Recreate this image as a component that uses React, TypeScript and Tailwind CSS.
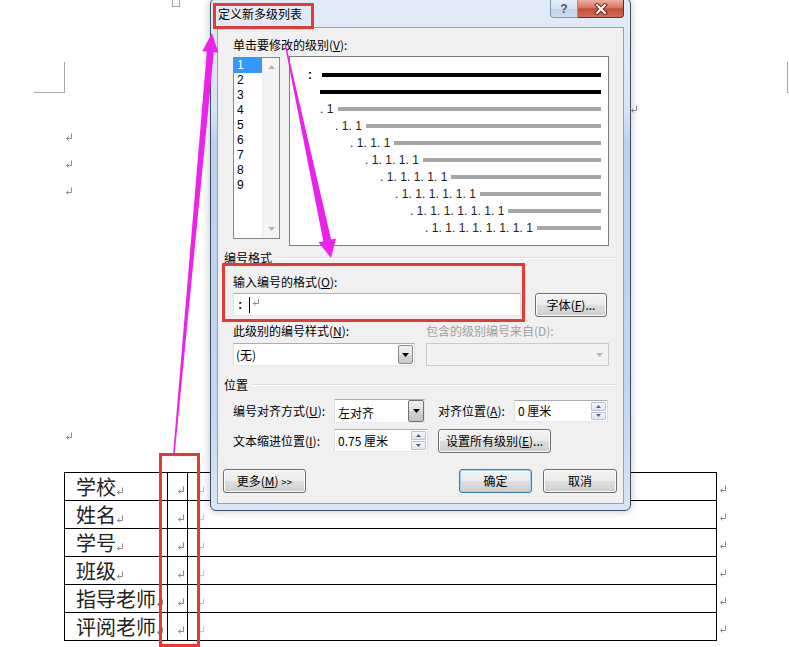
import type { ReactNode } from "react";

const uiFont = "font-['Liberation_Sans','Noto_Sans_CJK_SC',sans-serif]";
const cjk = "font-['Noto_Sans_CJK_SC',sans-serif]";

function ReturnMark({ className = "" }: { className?: string }) {
  return (
    <svg viewBox="0 0 8 8" className={`h-[8px] w-[8px] shrink-0 ${className}`} aria-hidden="true">
      <path
        d="M6.5 0.5V5.5H1.5M3.5 3.5L1.5 5.5L3.5 7.5"
        fill="none"
        stroke="currentColor"
        strokeWidth="1"
      />
    </svg>
  );
}

function Key({ label, k, tail = ":" }: { label: string; k: string; tail?: string }) {
  return (
    <span className="whitespace-nowrap">
      {label}(<u>{k}</u>){tail}
    </span>
  );
}

function WinButton({
  children,
  className = "",
  primary,
}: {
  children: ReactNode;
  className?: string;
  primary?: boolean;
}) {
  return (
    <div
      className={`flex items-center justify-center rounded-[3px] border bg-[linear-gradient(180deg,#f3f3f3_0%,#ebebeb_48%,#dddddd_52%,#cfcfcf_100%)] ${
        primary
          ? "border-[#3c7fb1] shadow-[inset_0_0_0_1px_#9fd0ee]"
          : "border-[#707070] shadow-[inset_0_0_0_1px_#fbfbfb]"
      } ${className}`}
    >
      {children}
    </div>
  );
}

function ArrowDown({ color = "#000" }: { color?: string }) {
  return (
    <svg viewBox="0 0 7 4" className="h-[4px] w-[7px]" aria-hidden="true">
      <path d="M0 0H7L3.5 4Z" fill={color} />
    </svg>
  );
}

function Spinner() {
  return (
    <div className="flex w-[16px] flex-col gap-[1px] py-[1px] pr-[1px]">
      {[0, 1].map((i) => (
        <div
          key={i}
          className="flex flex-1 items-center justify-center rounded-[1px] border border-[#b7c3d1] bg-[linear-gradient(180deg,#f4f7fa_0%,#dfe6ee_100%)]"
        >
          <svg viewBox="0 0 5 3" className="h-[3px] w-[5px]" aria-hidden="true">
            <path d={i === 0 ? "M0 3H5L2.5 0Z" : "M0 0H5L2.5 3Z"} fill="#4f6384" />
          </svg>
        </div>
      ))}
    </div>
  );
}

const field =
  "border border-[#abadb3] border-x-[#dbdfe6] border-b-[#e3e9ef] bg-white";

const levels = ["1", "2", "3", "4", "5", "6", "7", "8", "9"];

const tableRows = ["学校", "姓名", "学号", "班级", "指导老师", "评阅老师"];

function SectionHead({ title, gap }: { title: string; gap: string }) {
  return (
    <div className="flex h-[16px] items-center">
      <span>{title}</span>
      <div className={`h-[2px] flex-1 border-t border-b border-t-[#d5dfe5] border-b-white ${gap}`} />
    </div>
  );
}

function Dialog() {
  return (
    <div
      className={`absolute left-[210px] top-[-2px] flex h-[513px] w-[421px] flex-col rounded-[6px] border border-[#3d4f66] bg-[linear-gradient(180deg,#e2ecf7_0%,#d6e4f3_22%,#bcd2ea_28%,#c3d7ee_80%,#d8e6f5_100%)] px-[6px] pb-[6px] text-[12px] leading-[16px] text-black shadow-[0_0_8px_rgba(0,0,0,0.25)] ${uiFont}`}
    >
      <div className="flex h-[28px] items-start justify-between">
        <span className={`pl-[1px] pt-[7px] ${cjk}`}>定义新多级列表</span>
        <div className="mt-[1px] flex">
          <div className="flex h-[18px] w-[28px] items-center justify-center rounded-bl-[4px] border border-t-0 border-[#8494aa] bg-[linear-gradient(180deg,#e8f0f8_0%,#d5e2f0_50%,#c1d3e8_52%,#cddcee_100%)] text-[12px] font-bold text-[#44556e]">
            ?
          </div>
          <div className="flex h-[18px] w-[46px] items-center justify-center rounded-br-[4px] border border-l-0 border-t-0 border-[#6b2a24] bg-[linear-gradient(180deg,#eab0a4_0%,#d8775f_46%,#c44b33_52%,#d56f58_100%)]">
            <svg viewBox="0 0 14 12" className="h-[12px] w-[14px]" aria-hidden="true">
              <path d="M3 2L11 10M11 2L3 10" stroke="#5b1f17" strokeWidth="4" strokeLinecap="square" />
              <path d="M3 2L11 10M11 2L3 10" stroke="#fff" strokeWidth="2.2" strokeLinecap="square" />
            </svg>
          </div>
        </div>
      </div>

      <div className="flex-1 border border-[#8da2bb] bg-[#f0f0f0] px-[6px] pt-[9px]">
        <div className={`ml-[9px] h-[19px] ${cjk}`}>
          <Key label="单击要修改的级别" k="V" />
        </div>
        <div className="ml-[9px] flex items-start">
          <div className="mt-[1px] flex h-[182px] w-[47px] border border-[#828790] bg-white">
            <div className="w-[28px]">
              {levels.map((n, i) => (
                <div
                  key={n}
                  className={`h-[15px] pl-[3px] text-[12px] leading-[15px] ${
                    i === 0 ? "bg-[#3399ff] text-white" : ""
                  }`}
                >
                  {n}
                </div>
              ))}
            </div>
            <div className="flex w-[17px] flex-col items-center justify-between border-l border-[#ececec] bg-[#f5f5f5] py-[7px]">
              <svg viewBox="0 0 7 4" className="h-[4px] w-[7px]" aria-hidden="true">
                <path d="M0 4H7L3.5 0Z" fill="#b4b4b4" />
              </svg>
              <ArrowDown color="#b4b4b4" />
            </div>
          </div>

          <div className="ml-[9px] h-[190px] w-[320px] border border-[#7e7e7e] bg-white pr-[7px] pt-[9px]">
            <div className="flex h-[17px] items-center pl-[18px]">
              <span className="text-[12px] font-bold leading-none">:</span>
              <div className="ml-[10px] h-[4px] flex-1 bg-black" />
            </div>
            <div className="flex h-[17px] items-center pl-[30px]">
              <div className="h-[4px] flex-1 bg-black" />
            </div>
            {levels.slice(0, 8).map((_, k) => (
              <div
                key={k}
                className="flex h-[17px] items-center"
                style={{ paddingLeft: 30 + 15 * k }}
              >
                <span className="whitespace-pre text-[12px] tracking-[0.05px] text-[#222]">
                  {Array.from({ length: k + 1 }, () => ". 1").join("")}
                </span>
                <div className="ml-[4px] h-[4px] flex-1 bg-[#a6a6a6]" />
              </div>
            ))}
          </div>
        </div>

        <div className={`mt-[4px] ${cjk}`}>
          <SectionHead title="编号格式" gap="ml-[3px]" />
        </div>

        <div className={`ml-[9px] mt-[8px] h-[16px] ${cjk}`}>
          <Key label="输入编号的格式" k="O" />
        </div>
        <div className="ml-[9px] mt-[3px] flex items-start">
          <div className={`flex h-[23px] w-[288px] items-start pl-[4px] pt-[3px] ${field}`}>
            <span className="text-[13px] font-bold leading-[16px]">:</span>
            <div className="ml-[7px] h-[16px] w-[1px] bg-black" />
            <ReturnMark className="ml-[2px] mt-[1px] text-[#8a8a8a]" />
          </div>
          <WinButton className={`ml-[14px] h-[24px] w-[72px] ${cjk}`}>
            <Key label="字体" k="F" tail="..." />
          </WinButton>
        </div>

        <div className={`ml-[9px] mt-[6px] flex h-[16px] ${cjk}`}>
          <div className="w-[193px]">
            <Key label="此级别的编号样式" k="N" />
          </div>
          <div className="text-[#a0a0a0]">包含的级别编号来自(D):</div>
        </div>
        <div className="ml-[9px] mt-[4px] flex">
          <div className={`flex h-[23px] w-[182px] items-center justify-between pl-[2px] ${field}`}>
            <span className={cjk}>(无)</span>
            <div className="mr-[1px] flex h-[19px] w-[15px] items-center justify-center rounded-[2px] border border-[#8a8a8a] bg-[linear-gradient(180deg,#f2f2f2_0%,#e5e5e5_50%,#d6d6d6_52%,#cacaca_100%)]">
              <ArrowDown />
            </div>
          </div>
          <div className="ml-[11px] flex h-[23px] w-[183px] items-center justify-end border border-[#c9c9c9] bg-[#f2f2f2] pr-[5px]">
            <ArrowDown color="#b8b8b8" />
          </div>
        </div>

        <div className={`mt-[11px] ${cjk}`}>
          <SectionHead title="位置" gap="ml-[5px]" />
        </div>

        <div className={`ml-[9px] mt-[6px] flex h-[24px] items-center ${cjk}`}>
          <div className="w-[101px]">
            <Key label="编号对齐方式" k="U" />
          </div>
          <div className={`flex h-[24px] w-[91px] items-center justify-between pl-[3px] ${field}`}>
            <span className="pt-[3px]">左对齐</span>
            <div className="flex h-[22px] w-[16px] items-center justify-center rounded-[2px] border border-[#707070] bg-[linear-gradient(180deg,#f2f2f2_0%,#e3e3e3_50%,#d3d3d3_52%,#c4c4c4_100%)]">
              <ArrowDown />
            </div>
          </div>
          <div className="ml-[13px] w-[76px]">
            <Key label="对齐位置" k="A" />
          </div>
          <div className={`flex h-[22px] w-[94px] items-stretch justify-between pl-[3px] ${field}`}>
            <span className="self-center">0 厘米</span>
            <Spinner />
          </div>
        </div>

        <div className={`ml-[9px] mt-[6px] flex h-[23px] items-center ${cjk}`}>
          <div className="w-[101px]">
            <Key label="文本缩进位置" k="I" />
          </div>
          <div className={`flex h-[23px] w-[94px] items-stretch justify-between pl-[3px] ${field}`}>
            <span className="self-center">0.75 厘米</span>
            <Spinner />
          </div>
          <WinButton className="ml-[10px] h-[24px] w-[113px]">
            <Key label="设置所有级别" k="E" tail="..." />
          </WinButton>
        </div>

        <div className={`mt-[17px] flex items-center justify-between ${cjk}`}>
          <WinButton className="-ml-[1px] h-[24px] w-[83px]">
            <span className="whitespace-nowrap">
              更多(<u>M</u>) <span className="text-[10px]">&gt;&gt;</span>
            </span>
          </WinButton>
          <div className="flex gap-[11px]">
            <WinButton primary className="h-[24px] w-[73px]">
              确定
            </WinButton>
            <WinButton className="h-[24px] w-[74px]">取消</WinButton>
          </div>
        </div>
      </div>
    </div>
  );
}

export default function App() {
  return (
    <div className="relative h-[647px] w-[789px] overflow-hidden bg-white">
      <div className="h-[62px]">
        <div className="ml-[172px] h-[7px] w-[8px] border border-t-0 border-[#a0a0a0]" />
      </div>
      <div className="flex h-[31px] justify-between">
        <div className="ml-[34px] w-[31px] border-b border-r border-[#a8a8a8]" />
        <div className="w-[2px] border-b border-l border-[#a8a8a8]" />
      </div>

      <div className="ml-[630px] mt-[12px] text-[#8a8a8a]">
        <ReturnMark />
      </div>
      <div className="ml-[65px] mt-[20px] text-[#8a8a8a]">
        <ReturnMark />
      </div>
      <div className="ml-[65px] mt-[19px] text-[#8a8a8a]">
        <ReturnMark />
      </div>
      <div className="ml-[65px] mt-[19px] text-[#8a8a8a]">
        <ReturnMark />
      </div>
      <div className="ml-[65px] mt-[237px] text-[#8a8a8a]">
        <ReturnMark />
      </div>

      <div className={`ml-[64px] mt-[32px] text-[20px] text-[#222] ${cjk}`}>
        {tableRows.map((name, i) => (
          <div key={name} className="flex items-center">
            <div
              className={`flex w-[653px] border-x border-b border-black ${
                i === 0 ? "h-[29px] border-t" : "h-[28px]"
              }`}
            >
              <div className="flex w-[103px] items-center overflow-hidden border-r border-black pl-[11px]">
                <span className="whitespace-nowrap leading-[26px]">{name}</span>
                <ReturnMark className="mt-[8px] h-[6px] w-[6px] text-[#8a8a8a]" />
              </div>
              <div className="flex w-[20px] items-center border-r border-black pl-[9px]">
                <ReturnMark className="mt-[6px] h-[6px] w-[6px] text-[#8a8a8a]" />
              </div>
              <div className="flex flex-1 items-center pl-[9px]">
                <ReturnMark className="mt-[6px] h-[6px] w-[6px] text-[#c4c4c4]" />
              </div>
            </div>
            <ReturnMark className="ml-[2px] mt-[4px] text-[#8a8a8a]" />
          </div>
        ))}
      </div>

      <Dialog />

      <div className="absolute left-[213px] top-[3px] h-[26px] w-[101px] border-[3px] border-[#e53935]" />
      <div className="absolute left-[222px] top-[263px] h-[59px] w-[303px] border-[3px] border-[#e53935]" />
      <div className="absolute left-[159px] top-[453px] h-[194px] w-[41px] border-[3px] border-[#e53935]" />

      <svg
        className="pointer-events-none absolute left-0 top-0 h-[647px] w-[789px]"
        viewBox="0 0 789 647"
        aria-hidden="true"
      >
        <polygon
          points="212,33 218.3,52.6 213.8,52.2 174.8,453 173.2,453 206.8,51.6 202.3,51.2"
          fill="#ea22ea"
        />
        <polygon
          points="331,258 318.4,242.3 323.3,241.2 284.4,43.1 285.6,42.9 331.1,239.6 336,238.5"
          fill="#ea22ea"
        />
      </svg>
    </div>
  );
}
